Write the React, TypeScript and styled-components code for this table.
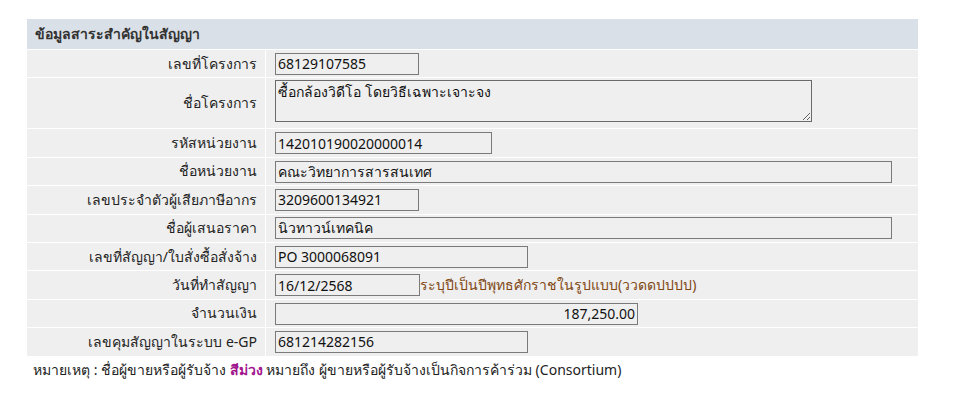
import React from 'react';
import styled, { createGlobalStyle } from 'styled-components';

const GlobalStyle = createGlobalStyle`
  body {
    margin: 0;
    background: #fff;
    font-family: "Noto Sans", Tahoma, "DejaVu Sans", sans-serif;
    font-size: 14px;
    color: #222;
  }
`;

const Page = styled.div`
  padding: 18px 0 0 26px;
`;

const InfoTable = styled.table`
  width: 893px;
  border-spacing: 1px;
  border-collapse: separate;
`;

const HeaderCell = styled.th`
  background: #dae0e7;
  height: 30px;
  padding: 0 8px;
  text-align: left;
  font-weight: bold;
  color: #333;
`;

const LabelCell = styled.td`
  background: #efefef;
  width: 230px;
  padding: 0 8px 0 0;
  text-align: right;
  vertical-align: middle;
  white-space: nowrap;
`;

const ValueCell = styled.td`
  background: #efefef;
  height: 27.4px;
  padding: 0 0 0 9px;
  white-space: nowrap;
`;

const Field = styled.input<{ $w: number; $right?: boolean }>`
  box-sizing: border-box;
  width: ${(p) => p.$w}px;
  height: 22px;
  margin: 0;
  padding: 0 2px;
  border: 1px solid #7a7a7a;
  background: transparent;
  font: inherit;
  color: #111;
  text-align: ${(p) => (p.$right ? 'right' : 'left')};
  vertical-align: middle;
`;

const Memo = styled.textarea`
  box-sizing: border-box;
  width: 537px;
  height: 42px;
  margin: 2px 0 6px;
  padding: 0 2px;
  border: 1px solid #6a6a6a;
  background: transparent;
  font: inherit;
  color: #111;
  vertical-align: top;
  resize: both;
`;

const Hint = styled.span`
  color: #7f4813;
  vertical-align: middle;
`;

const Note = styled.p`
  margin: 2px 0 0 7px;
  color: #222;
`;

const Purple = styled.span`
  color: #a0158e;
  font-weight: bold;
`;

interface Row {
  label: string;
  value: string;
  width: number;
  right?: boolean;
  hint?: string;
}

const rows: Row[] = [
  { label: 'รหัสหน่วยงาน', value: '142010190020000014', width: 217 },
  { label: 'ชื่อหน่วยงาน', value: 'คณะวิทยาการสารสนเทศ', width: 617 },
  { label: 'เลขประจำตัวผู้เสียภาษีอากร', value: '3209600134921', width: 144 },
  { label: 'ชื่อผู้เสนอราคา', value: 'นิวทาวน์เทคนิค', width: 617 },
  { label: 'เลขที่สัญญา/ใบสั่งซื้อสั่งจ้าง', value: 'PO 3000068091', width: 253 },
  {
    label: 'วันที่ทำสัญญา',
    value: '16/12/2568',
    width: 145,
    hint: 'ระบุปีเป็นปีพุทธศักราชในรูปแบบ(ววดดปปปป)',
  },
  { label: 'จำนวนเงิน', value: '187,250.00', width: 363, right: true },
  { label: 'เลขคุมสัญญาในระบบ e-GP', value: '681214282156', width: 253 },
];

const App = () => {
  return (
    <Page>
      <GlobalStyle />
      <InfoTable>
        <tbody>
          <tr>
            <HeaderCell colSpan={2}>ข้อมูลสาระสำคัญในสัญญา</HeaderCell>
          </tr>
          <tr>
            <LabelCell>เลขที่โครงการ</LabelCell>
            <ValueCell>
              <Field $w={144} defaultValue="68129107585" />
            </ValueCell>
          </tr>
          <tr>
            <LabelCell>ชื่อโครงการ</LabelCell>
            <ValueCell>
              <Memo defaultValue="ซื้อกล้องวิดีโอ โดยวิธีเฉพาะเจาะจง" />
            </ValueCell>
          </tr>
          {rows.map((r) => (
            <tr key={r.label}>
              <LabelCell>{r.label}</LabelCell>
              <ValueCell>
                <Field $w={r.width} $right={r.right} defaultValue={r.value} />
                {r.hint && <Hint>{r.hint}</Hint>}
              </ValueCell>
            </tr>
          ))}
        </tbody>
      </InfoTable>
      <Note>
        หมายเหตุ : ชื่อผู้ขายหรือผู้รับจ้าง <Purple>สีม่วง</Purple> หมายถึง
        ผู้ขายหรือผู้รับจ้างเป็นกิจการค้าร่วม (Consortium)
      </Note>
    </Page>
  );
};

export default App;
